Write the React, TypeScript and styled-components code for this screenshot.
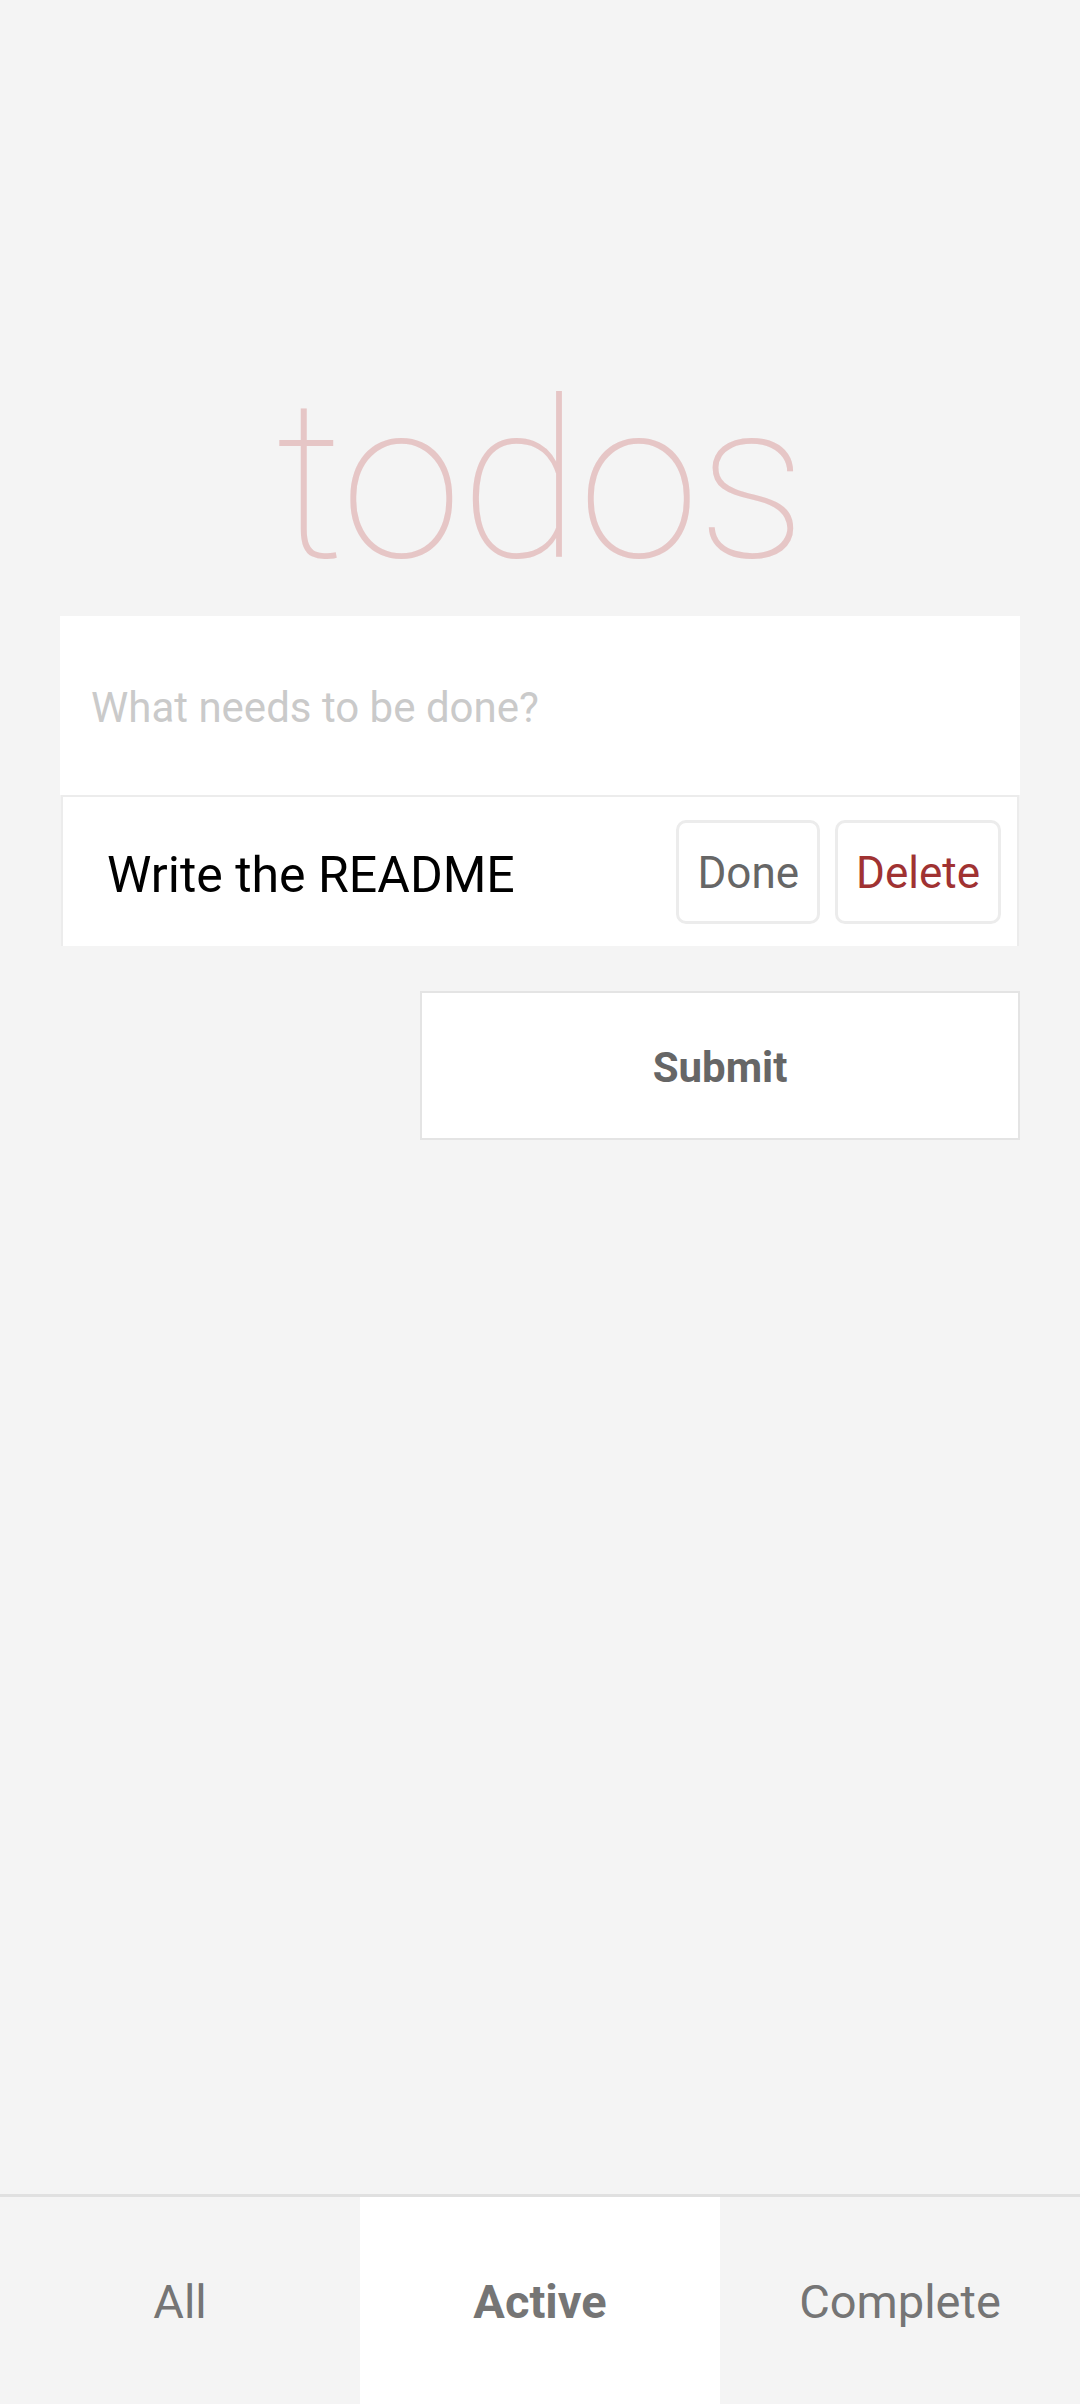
import React from "react";
import styled, { createGlobalStyle } from "styled-components";

const Global = createGlobalStyle`
  html, body { margin: 0; padding: 0; background: #f4f4f4; }
  body { font-family: Roboto, "Noto Sans", "Liberation Sans", sans-serif; }
  * { box-sizing: border-box; }
`;

const Page = styled.div`
  min-height: 2404px;
  display: flex;
  flex-direction: column;
  background: #f4f4f4;
`;

const Main = styled.main`
  flex: 1;
  display: flex;
  flex-direction: column;
  padding: 372px 60px 0;
`;

const Title = styled.h1`
  margin: 0 0 24px;
  height: 220px;
  font-family: Roboto, "Noto Sans", sans-serif;
  font-weight: 100;
  font-size: 220px;
  line-height: 220px;
  text-align: center;
  color: #e6c6c6;
  letter-spacing: -2px;
`;

const Input = styled.input`
  display: block;
  width: 100%;
  height: 179px;
  border: none;
  outline: none;
  background: #ffffff;
  padding: 4px 31px 0;
  font-family: Roboto, "Noto Sans", sans-serif;
  font-size: 42px;
  color: #333;
  &::placeholder { color: #cacaca; }
`;

const TodoRow = styled.div`
  display: flex;
  align-items: center;
  gap: 15px;
  height: 151px;
  margin: 0 1px;
  background: #ffffff;
  border: 2px solid #ececec;
  border-bottom: none;
  padding: 0 16px 0 44px;
`;

const TodoText = styled.span`
  flex: 1;
  font-size: 50px;
  color: #000;
  padding-top: 6px;
`;

const ActionButton = styled.button<{ $danger?: boolean }>`
  height: 104px;
  padding: 3px 18px 0;
  background: #ffffff;
  border: 3px solid #ececec;
  border-radius: 10px;
  font-family: Roboto, "Noto Sans", sans-serif;
  font-size: 44px;
  color: ${(p) => (p.$danger ? "#a03232" : "#666666")};
`;

const SubmitWrap = styled.div`
  display: flex;
  justify-content: flex-end;
  margin-top: 45px;
`;

const SubmitButton = styled.button`
  width: 600px;
  height: 149px;
  padding: 4px 0 0;
  background: #ffffff;
  border: 2px solid #e4e4e4;
  font-family: Roboto, "Noto Sans", sans-serif;
  font-weight: 700;
  font-size: 42px;
  color: #666666;
`;

const TabBar = styled.nav`
  display: grid;
  grid-template-columns: repeat(3, 1fr);
  height: 210px;
  border-top: 3px solid #e0e0e0;
`;

const Tab = styled.button<{ $active?: boolean }>`
  border: none;
  background: ${(p) => (p.$active ? "#ffffff" : "#f4f4f4")};
  font-family: Roboto, "Noto Sans", sans-serif;
  font-size: 47px;
  font-weight: ${(p) => (p.$active ? 700 : 400)};
  color: #757575;
  padding: 2px 0 0;
`;

export default function App() {
  return (
    <Page>
      <Global />
      <Main>
        <Title>todos</Title>
        <Input placeholder="What needs to be done?" />
        <TodoRow>
          <TodoText>Write the README</TodoText>
          <ActionButton>Done</ActionButton>
          <ActionButton $danger>Delete</ActionButton>
        </TodoRow>
        <SubmitWrap>
          <SubmitButton>Submit</SubmitButton>
        </SubmitWrap>
      </Main>
      <TabBar>
        <Tab>All</Tab>
        <Tab $active>Active</Tab>
        <Tab>Complete</Tab>
      </TabBar>
    </Page>
  );
}
